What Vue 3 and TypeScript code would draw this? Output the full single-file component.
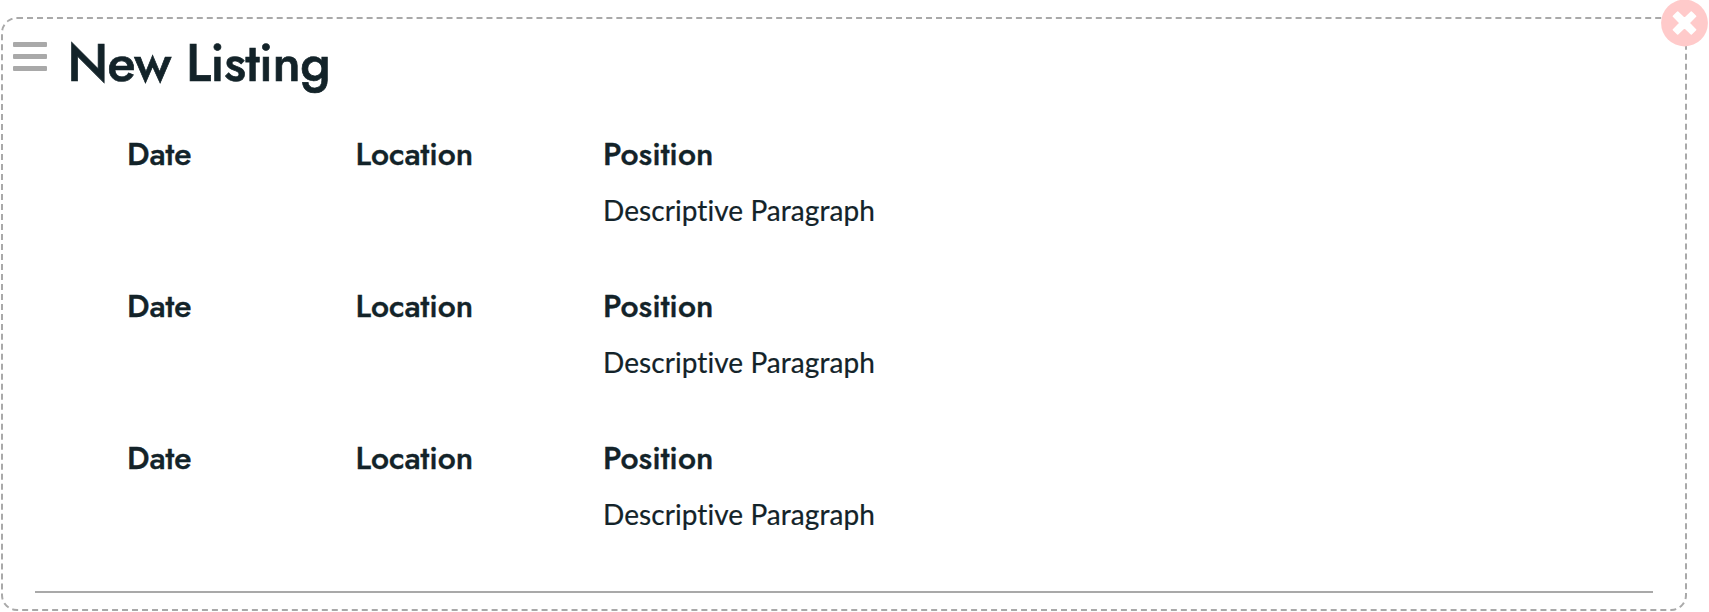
<script setup lang="ts">
interface Listing {
  date: string
  location: string
  position: string
  description: string
}

const title = 'New Listing'
const listings: Listing[] = Array.from({ length: 3 }, () => ({
  date: 'Date',
  location: 'Location',
  position: 'Position',
  description: 'Descriptive Paragraph',
}))
</script>

<template>
  <section class="panel">
    <button class="close" aria-label="Remove">
      <svg viewBox="0 0 47 47">
        <circle cx="23.5" cy="23" r="23.4" fill="#ffcaca" />
        <path
          d="M16.7 12L23.5 18.5L30.3 12L34.6 16.3L28 23L34.6 29.7L30.3 34L23.5 27.5L16.7 34L12.4 29.7L19 23L12.4 16.3Z"
          fill="#fff" stroke="#fff" stroke-width="1.6" stroke-linejoin="round"
        />
      </svg>
    </button>
    <header class="head">
      <div class="handle"><span /><span /><span /></div>
      <h1>{{ title }}</h1>
    </header>
    <div class="rows">
      <article v-for="(item, i) in listings" :key="i" class="row">
        <h2 class="date">{{ item.date }}</h2>
        <h2 class="location">{{ item.location }}</h2>
        <div>
          <h2 class="position">{{ item.position }}</h2>
          <p>{{ item.description }}</p>
        </div>
      </article>
    </div>
    <hr />
  </section>
</template>

<style>
body {
  background: #fff;
}
</style>

<style scoped>
.panel {
  position: relative;
  box-sizing: border-box;
  width: 1686px;
  height: 594px;
  margin: 17px 0 0 1px;
  border: 2px dashed #a9a9a9;
  border-radius: 16px;
  color: #132329;
  font-family: Jost, Lato, sans-serif;
  display: flex;
  flex-direction: column;
}
.close {
  position: absolute;
  top: -19px;
  right: -23px;
  width: 47px;
  height: 47px;
  padding: 0;
  border: 0;
  background: none;
}
.close svg {
  display: block;
  width: 47px;
  height: 47px;
}
.head {
  display: flex;
  height: 115px;
}
.handle {
  display: flex;
  flex-direction: column;
  gap: 7px;
  width: 34px;
  margin: 23px 0 0 10.4px;
}
.handle span {
  height: 5px;
  border-radius: 1px;
  background: #a9a9a9;
}
h1,
h2,
p {
  margin: 0;
  white-space: nowrap;
}
h1 {
  margin: 14px 0 0 20px;
  font-size: 52px;
  line-height: 60px;
  font-weight: 500;
  letter-spacing: -0.5px;
  -webkit-text-stroke: 0.7px currentColor;
}
h2 {
  font-size: 32px;
  line-height: 40px;
  font-weight: 500;
  -webkit-text-stroke: 0.4px currentColor;
}
.rows {
  padding-left: 124px;
}
.row {
  display: grid;
  grid-template-columns: 228.5px 247.5px 1fr;
  height: 152px;
}
p {
  margin-top: 19px;
  font-family: Lato, sans-serif;
  font-size: 28px;
  line-height: 34px;
  font-variant-ligatures: none;
  letter-spacing: 0.07px;
  -webkit-text-stroke: 0.2px currentColor;
}
hr {
  width: 1618px;
  height: 2px;
  margin: 1px 0 0 32px;
  border: 0;
  background: #a9a9a9;
}
</style>
